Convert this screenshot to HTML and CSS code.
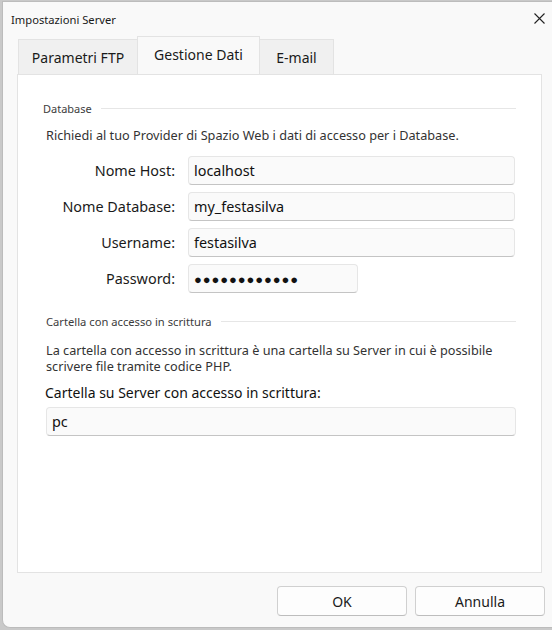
FILE: index.html
```html
<!DOCTYPE html>
<html lang="it">
<head>
<meta charset="utf-8">
<title>Impostazioni Server</title>
<link rel="stylesheet" href="styles.css">
</head>
<body>
<div class="dialog">
  <div class="titlebar">
    <span class="title">Impostazioni Server</span>
    <svg class="close" width="11" height="11" viewBox="0 0 11 11"><path d="M0.5 0.5 L10.5 10.5 M10.5 0.5 L0.5 10.5" stroke="#222" stroke-width="1.1" fill="none"/></svg>
  </div>
  <div class="tabs">
    <div class="tab">Parametri FTP</div>
    <div class="tab active">Gestione Dati</div>
    <div class="tab">E-mail</div>
  </div>
  <div class="panel">
    <div class="group-head"><span>Database</span><i></i></div>
    <p class="hint">Richiedi al tuo Provider di Spazio Web i dati di accesso per i Database.</p>
    <div class="form">
      <label>Nome Host:</label><div class="input">localhost</div>
      <label>Nome Database:</label><div class="input">my_festasilva</div>
      <label>Username:</label><div class="input">festasilva</div>
      <label>Password:</label><div class="input pw">●●●●●●●●●●●●</div>
    </div>
    <div class="group-head g2"><span>Cartella con accesso in scrittura</span><i></i></div>
    <p class="hint h2">La cartella con accesso in scrittura è una cartella su Server in cui è possibile scrivere file tramite codice PHP.</p>
    <div class="biglabel">Cartella su Server con accesso in scrittura:</div>
    <div class="input wide">pc</div>
  </div>
  <div class="footer">
    <button class="btn">OK</button>
    <button class="btn">Annulla</button>
  </div>
</div>
</body>
</html>
```
FILE: styles.css
```css
html, body { margin: 0; padding: 0; }
body {
  width: 552px; height: 630px; overflow: hidden;
  background: #c9c9c9;
  font-family: "Noto Sans", "Open Sans", sans-serif;
  color: #1a1a1a;
}
.dialog {
  margin: 1px 0 0 2px;
  width: 560px;
  height: 627px;
  box-sizing: border-box;
  background: #f9f9f9;
  border: 1px solid #bcbcbc;
  border-right: none;
  border-radius: 0 0 0 8px;
  display: flex; flex-direction: column;
}
.titlebar {
  height: 34px;
  display: flex; align-items: center;
  padding-left: 8px;
  position: relative;
}
.title { font-size: 11.2px; color: #1a1a1a; }
.close { position: absolute; left: 531px; top: 11px; }
.tabs {
  display: flex; align-items: flex-end;
  padding-left: 15px;
  height: 38px;
}
.tab {
  height: 35px; box-sizing: border-box;
  background: #f0f0f0;
  border: 1px solid #e3e3e3; border-bottom: none;
  font-size: 14px;
  white-space: nowrap;
  display: flex; align-items: center; justify-content: center;
  padding: 0;
  margin-right: -1px;
}
.tab:nth-child(1) { width: 120px; }
.tab:nth-child(3) { width: 75px; }
.tab.active {
  height: 38px; width: 123px;
  background: #f9f9f9;
  padding: 0 0 3px 0;
}
.panel {
  margin-left: 14px;
  width: 525px;
  height: 499px;
  box-sizing: border-box;
  background: #fff;
  border: 1px solid #e3e3e3;
  padding: 26px 0 0 25px;
}
.group-head {
  display: flex; align-items: center;
  width: 473px;
  font-size: 11px; color: #3c3c3c;
  height: 14px;
}
.group-head i {
  flex: 1; height: 1px; background: #e6e6e6; margin-left: 9px;
}
.hint {
  margin: 12px 0 0 3px;
  font-size: 12.7px; color: #333;
  line-height: 16px;
}
.form {
  margin-top: 13px;
  display: grid;
  grid-template-columns: 132px auto;
  column-gap: 13px;
  row-gap: 7px;
  width: 472px;
  align-items: center;
}
.form label {
  text-align: right; font-size: 14.4px; color: #1a1a1a;
}
.input {
  height: 29px; box-sizing: border-box;
  background: #fafafa;
  border: 1px solid #e6e6e6;
  border-bottom-color: #c4c4c4;
  border-radius: 4px;
  font-size: 14.4px;
  padding-left: 5px;
  display: flex; align-items: center;
  color: #111;
}
.input.pw { width: 170px; font-size: 13px; letter-spacing: 0.9px; }
.g2 { margin-top: 21px; margin-left: 3px; width: 470px; font-size: 11.2px; }
.h2 { margin-top: 14px; width: 462px; }
.biglabel { margin: 9px 0 0 2px; font-size: 14px; color: #111; line-height: 20px; }
.input.wide { margin: 4px 0 0 3px; width: 470px; }
.footer {
  display: flex; justify-content: flex-end;
  gap: 8px;
  padding: 13px 0 0 0;
  width: 542px;
}
.btn {
  width: 130px; height: 30px;
  font-family: inherit;
  font-size: 14px; color: #1a1a1a;
  background: #fdfdfd;
  border: 1px solid #d0d0d0;
  border-bottom-color: #bdbdbd;
  border-radius: 4px;
}
```
